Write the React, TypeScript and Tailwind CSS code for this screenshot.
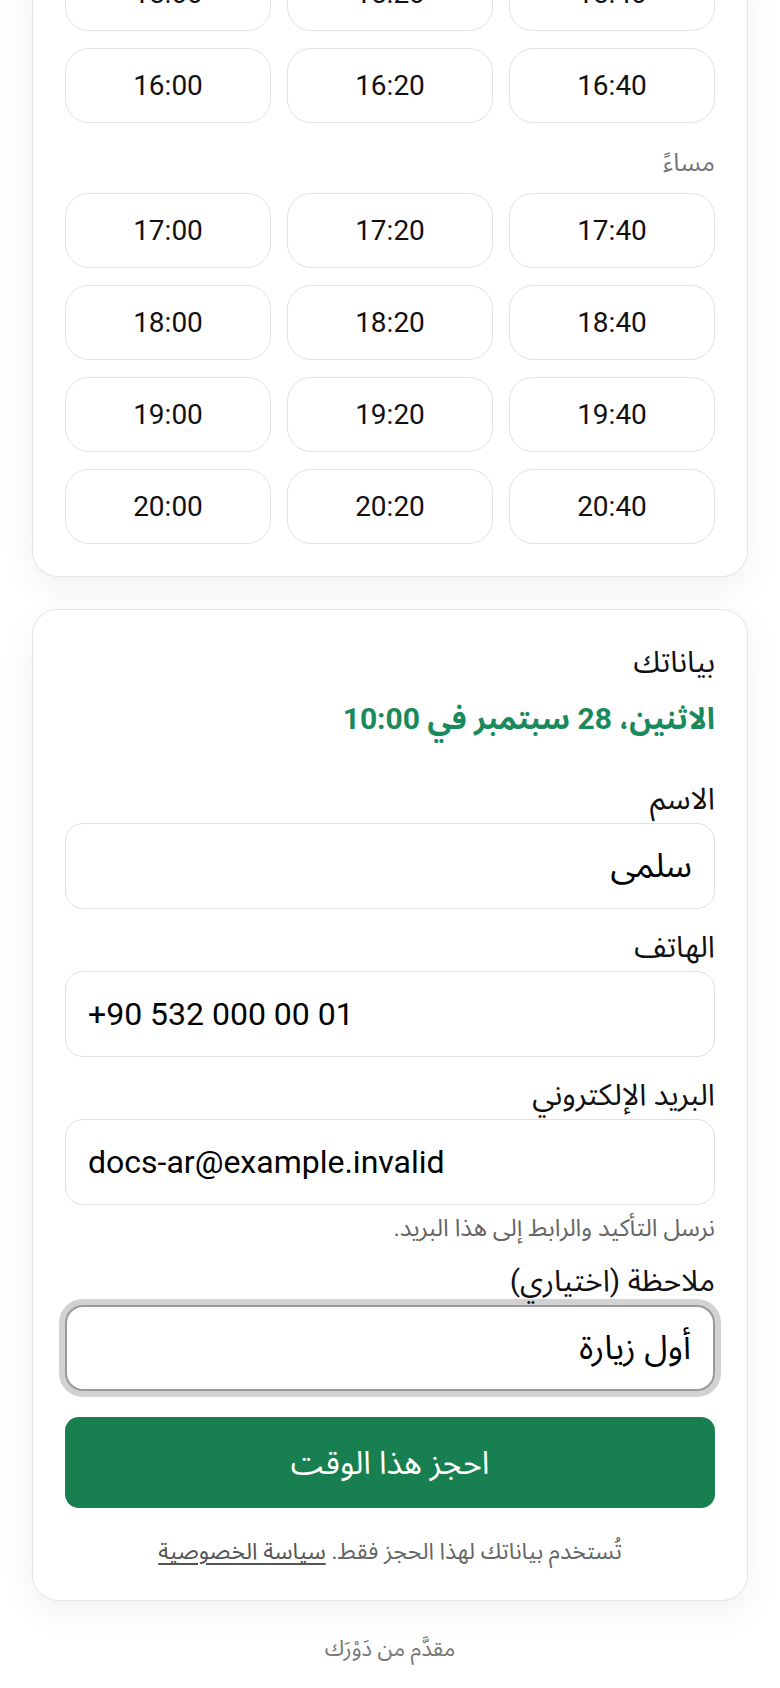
import { useState } from 'react'

const slots = [
  ['15:00', '15:20', '15:40'],
  ['16:00', '16:20', '16:40'],
]
const evening = [
  ['17:00', '17:20', '17:40'],
  ['18:00', '18:20', '18:40'],
  ['19:00', '19:20', '19:40'],
  ['20:00', '20:20', '20:40'],
]

function SlotGrid({ rows }: { rows: string[][] }) {
  return (
    <div dir="ltr" className="grid grid-cols-3 gap-x-4 gap-y-[17px]">
      {rows.flat().map((t) => (
        <button
          key={t}
          className="h-[75px] rounded-3xl border border-[#e2e2e2] bg-white text-[28px] text-[#111]"
        >
          {t}
        </button>
      ))}
    </div>
  )
}

function Field({
  label,
  value,
  ltr,
  focused,
}: {
  label: string
  value: string
  ltr?: boolean
  focused?: boolean
}) {
  const [v, setV] = useState(value)
  return (
    <div>
      <label className="block text-[30px] leading-[40px] text-[#111] mb-1">{label}</label>
      <input
        dir={ltr ? 'ltr' : 'rtl'}
        value={v}
        onChange={(e) => setV(e.target.value)}
        className={`block w-full h-[86px] rounded-[18px] bg-white px-[22px] text-black outline-none ${
          ltr ? 'text-[32px]' : 'text-[34px]'
        } ${
          focused
            ? 'border-2 border-[#9a9a9a] shadow-[0_0_0_6px_#d2d2d2]'
            : 'border border-[#e0e0e0]'
        }`}
      />
    </div>
  )
}

export default function App() {
  return (
    <div
      dir="rtl"
      className="min-h-screen bg-white font-['Roboto','Noto_Sans_Arabic','DejaVu_Sans',sans-serif] text-[#111]"
    >
      <div className="mx-[32px] -mt-[44px] flex flex-col gap-8">
        <section className="rounded-b-[26px] border border-t-0 border-[#e4e4e4] bg-white px-8 pb-8 shadow-[0_12px_36px_rgba(0,0,0,0.06)]">
          <SlotGrid rows={slots} />
          <div className="mt-[22px] mb-3 text-[25px] leading-[36px] text-[#777]">مساءً</div>
          <SlotGrid rows={evening} />
        </section>

        <section className="rounded-[26px] border border-[#e4e4e4] bg-white px-8 pt-8 pb-[30px] shadow-[0_12px_36px_rgba(0,0,0,0.06)]">
          <h2 className="text-[30px] leading-[40px] font-normal">بياناتك</h2>
          <p className="mt-[17px] text-[30px] leading-[40px] font-bold text-[#1a8a5c]">
            الاثنين، 28 سبتمبر في 10:00
          </p>

          <div className="mt-10">
            <Field label="الاسم" value="سلمى" />
          </div>
          <div className="mt-[18px]">
            <Field label="الهاتف" value="+90 532 000 00 01" ltr />
          </div>
          <div className="mt-[18px]">
            <Field label="البريد الإلكتروني" value="docs-ar@example.invalid" ltr />
          </div>
          <p className="mt-[5px] text-[24px] leading-[36px] text-[#666]">
            نرسل التأكيد والرابط إلى هذا البريد.
          </p>
          <div className="mt-[15px]">
            <Field label="ملاحظة (اختياري)" value="أول زيارة" focused />
          </div>

          <button className="mt-[26px] block w-full h-[91px] rounded-[14px] bg-[#177f50] text-[32px] text-white">
            احجز هذا الوقت
          </button>

          <p className="mt-[26px] text-center text-[23px] leading-[36px] text-[#666]">
            تُستخدم بياناتك لهذا الحجز فقط.{' '}
            <a href="#" className="underline underline-offset-4 text-[#555]">
              سياسة الخصوصية
            </a>
          </p>
        </section>
      </div>

      <footer className="pt-[30px] pb-8 text-center text-[22px] leading-[36px] text-[#777]">
        مقدَّم من دَوْرَك
      </footer>
    </div>
  )
}
